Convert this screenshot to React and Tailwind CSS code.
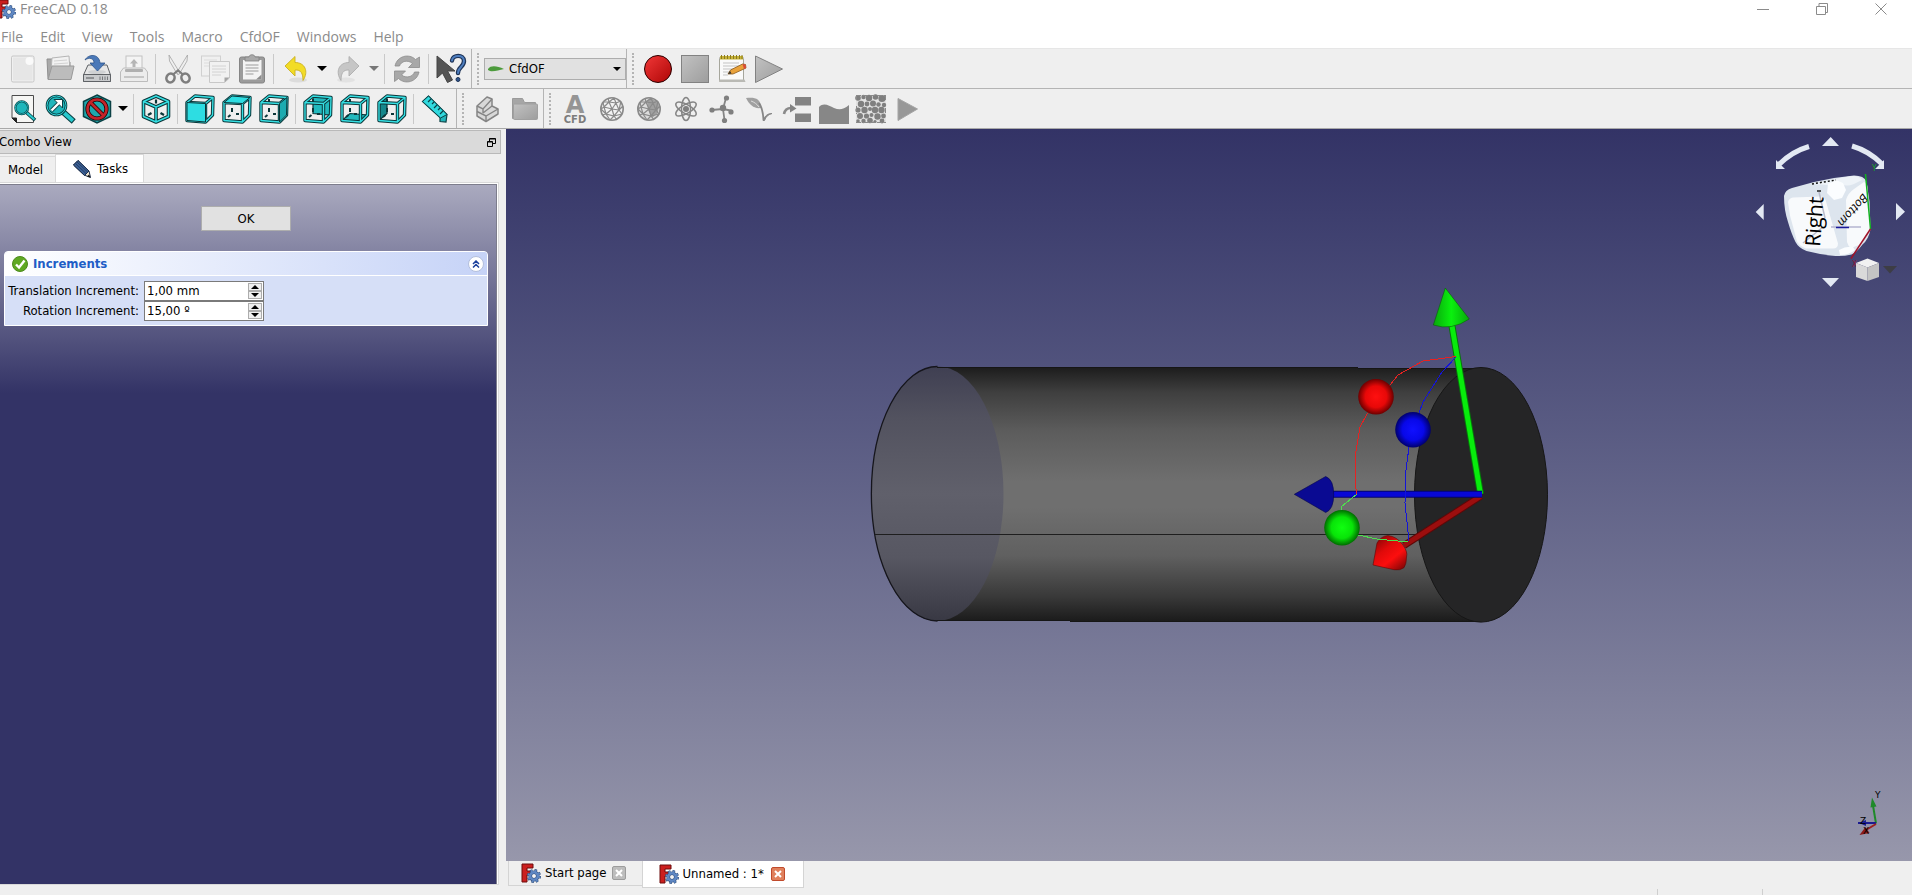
import { useState } from 'react'
import clsx from 'clsx'

const MENUS = ['File', 'Edit', 'View', 'Tools', 'Macro', 'CfdOF', 'Windows', 'Help']

function Icon({ children, className = 'size-[30px]' }) {
  return (
    <svg viewBox="0 0 30 30" className={clsx('shrink-0 overflow-visible', className)} fill="none" aria-hidden="true">
      {children}
    </svg>
  )
}

/* ---------- file icons ---------- */

const NewIcon = () => (
  <Icon>
    <rect x="3.500" y="2" width="22.500" height="26" rx="1.500" fill="#f0f0f0" stroke="#c6c6c6" />
    <rect x="5" y="3.500" width="19.500" height="23" fill="#e6e6e6" />
    <circle cx="21.500" cy="7" r="4" fill="#fafafa" />
  </Icon>
)

const OpenIcon = () => (
  <Icon>
    <path d="M2 5h9l2 3h12v17H3z" fill="#a9a9a9" stroke="#8f8f8f" />
    <path d="M7 4l17-2 1 16H6z" fill="#f2f2f2" stroke="#b5b5b5" />
    <path d="M9 7l13-1M9 10l14-1" stroke="#d2d2d2" />
    <path d="M7 12h22l-3 13.500H3z" fill="#bcbcbc" stroke="#999" />
  </Icon>
)

const SaveIcon = () => (
  <Icon>
    <path d="M6 11h19l3.500 10v6.500h-27V21z" fill="#e6e6e6" stroke="#5f6266" />
    <path d="M1.500 20.500h27v7h-27z" fill="#c9cbcd" stroke="#5f6266" />
    <ellipse cx="15" cy="18" rx="9" ry="2" fill="#cfd1d3" />
    <path d="M4 24h8" stroke="#8e9093" strokeWidth="2" />
    <path d="M18 22.500v3.500M20.500 22.500v3.500M23 22.500v3.500M25.500 22.500v3.500" stroke="#77797c" />
    <path d="M3 6C6 0 17-1 18 9h5l-7.500 8L8 9h4C12 4 7 3 3 6z" fill="#4a78b8" stroke="#2d548c" strokeWidth=".8" />
  </Icon>
)

const PrintIcon = () => (
  <Icon>
    <rect x="7" y="2" width="16" height="14" fill="#f4f4f4" stroke="#c2c2c2" />
    <path d="M15 5l4 4.500h-2.500V13h-3V9.500H11z" fill="#b5b5b5" />
    <path d="M4.500 14h21l3 4v9.500h-27V18z" fill="#ececec" stroke="#bcbcbc" />
    <rect x="6" y="15" width="18" height="3" rx="1" fill="#b0b0b0" />
    <path d="M5 23h20" stroke="#c6c6c6" strokeWidth="2" />
  </Icon>
)

const CutIcon = () => (
  <Icon>
    <path d="M6 1l11 18-2.500 1.500L6.500 7z" fill="#efefef" stroke="#a3a3a3" strokeWidth=".8" />
    <path d="M24.500 1l-11 18 2.500 1.500L24 7z" fill="#efefef" stroke="#a3a3a3" strokeWidth=".8" />
    <ellipse cx="7.500" cy="24" rx="4" ry="4.500" stroke="#7e7e7e" strokeWidth="2.600" transform="rotate(25 7.500 24)" />
    <ellipse cx="22.500" cy="24" rx="4" ry="4.500" stroke="#7e7e7e" strokeWidth="2.600" transform="rotate(-25 22.500 24)" />
    <path d="M10 20.500l5-4 5 4" stroke="#7e7e7e" strokeWidth="2.200" />
  </Icon>
)

const CopyIcon = () => (
  <Icon>
    <rect x="1.500" y="2" width="19" height="20" fill="#f0f0f0" stroke="#d0d0d0" />
    <path d="M4 6h13M4 9h13M4 12h8" stroke="#dcdcdc" />
    <path d="M9.500 7.500h20V24l-5 4.500h-15z" fill="#f1f1f1" stroke="#c8c8c8" />
    <path d="M12 12h14M12 15h14M12 18h14M12 21h9" stroke="#d2d2d2" />
    <path d="M29.500 23.500h-5v5z" fill="#a5a5a5" />
  </Icon>
)

const PasteIcon = () => (
  <Icon>
    <rect x="2.500" y="3" width="25" height="26" rx="2" fill="#9b9b9b" stroke="#858585" />
    <rect x="6" y="6" width="18.500" height="19.500" fill="#f3f3f3" />
    <path d="M8.500 11h13M8.500 14h13M8.500 17h13M8.500 20h8" stroke="#b9b9b9" strokeWidth="1.300" />
    <path d="M19 25.500l5.500-5v5z" fill="#8d8d8d" />
    <path d="M8 3h4c0-3 6-3 6 0h4v4H8z" fill="#a9a9a9" stroke="#808080" strokeWidth=".8" />
  </Icon>
)

const UndoIcon = () => (
  <Icon>
    <ellipse cx="17" cy="26" rx="9" ry="2.500" fill="#dcdcdc" />
    <path d="M4 12L14 2.500v6c10 0 14 9 8 18 0-7-2-11-8-10.500V22z" fill="#f2dc26" stroke="#c9b022" strokeWidth=".9" />
  </Icon>
)

const RedoIcon = () => (
  <Icon>
    <ellipse cx="13" cy="26" rx="9" ry="2.500" fill="#e2e2e2" />
    <path d="M26 12L16 2.500v6c-10 0-14 9-8 18 0-7 2-11 8-10.500V22z" fill="#c6c6c6" stroke="#aeaeae" strokeWidth=".9" />
  </Icon>
)

const RefreshIcon = () => (
  <Icon>
    <path d="M3 12C5 2 17-1 23.500 5.500L27.500 3v10.500H16.500l4-4C16 5.500 9 7 7.500 12z" fill="#a8a8a8" stroke="#8b8b8b" strokeWidth=".8" />
    <path d="M27 18C25 28 13 31 6.500 24.500L2.500 27.500V17h11l-4 4C14 24.500 21 23 22.500 18z" fill="#a8a8a8" stroke="#8b8b8b" strokeWidth=".8" />
  </Icon>
)

const WhatsThisIcon = () => (
  <Icon>
    <path d="M1 2v22l5.500-5 5 9.500 5-2.500-5-9h7.500z" fill="#555" stroke="#444" />
    <path d="M16 6.500C16.500.5 28 0 28 7c0 6-6 6-6 12" stroke="#1e3458" strokeWidth="4.400" strokeLinecap="round" />
    <path d="M16 6.500C16.500.5 28 0 28 7c0 6-6 6-6 12" stroke="#4f7fc0" strokeWidth="2" strokeLinecap="round" />
    <circle cx="22" cy="25.500" r="2" fill="#31558a" stroke="#1e3458" />
  </Icon>
)

/* ---------- macro icons ---------- */

const RecordIcon = () => (
  <Icon>
    <defs>
      <linearGradient id="rec" x2="1" y2="1">
        <stop stopColor="#f23838" />
        <stop offset="1" stopColor="#ad0606" />
      </linearGradient>
    </defs>
    <circle cx="15" cy="15" r="13.500" fill="url(#rec)" stroke="#2b0000" />
  </Icon>
)

const StopIcon = () => (
  <Icon>
    <rect x="1.500" y="1.500" width="27" height="27" fill="url(#greyFill)" stroke="#828282" />
  </Icon>
)

const NotesIcon = () => (
  <Icon>
    <rect x="2.500" y="3" width="24" height="24.500" rx="1.500" fill="#fafafa" stroke="#a6a69c" />
    <path d="M2.500 25.500h25l1 2.500H2z" fill="#b9b9b4" />
    <rect x="3" y="2" width="23" height="3.500" fill="#c8b437" />
    <path d="M4.500 1v4M7.500 1v4M10.500 1v4M13.500 1v4M16.500 1v4M19.500 1v4M22.500 1v4M25 1v4" stroke="#8a7a20" />
    <path d="M6 9h16M6 12h16M6 15h12M6 18h8M6 21h5" stroke="#c3c3c3" />
    <path d="M11 20l2.500-4L25.500 10l3 .5.500 3.500L16 20z" fill="#e9a23b" stroke="#8c5a1c" strokeWidth=".8" />
    <path d="M25.500 10l3 .5.500 3.500-2 1z" fill="#d9493a" />
    <path d="M11 20l2-3 1.500 2.500z" fill="#333" />
  </Icon>
)

const PlayIcon = () => (
  <Icon>
    <path d="M1.500 2v26.500L28.500 15z" fill="url(#greyFill)" stroke="#828282" />
  </Icon>
)

/* ---------- view icons ---------- */

const Magnifier = ({ arrow }) => (
  <>
    <path d="M17 17l9.500 8.500" stroke="#0b4145" strokeWidth={arrow ? 6 : 4.500} strokeLinecap="square" />
    <path d="M17 17l9.500 8.500" stroke="#28c9cd" strokeWidth={arrow ? 3.800 : 2.500} strokeLinecap="square" />
    <circle cx="11.500" cy="11.500" r={arrow ? 9.500 : 8} fill="#1fb6bb" stroke="#0b4145" strokeWidth="2.600" />
    <circle cx="11.500" cy="11.500" r={arrow ? 9.500 : 8} stroke="#2fd3d8" strokeWidth="1" />
  </>
)

const FitAllIcon = () => (
  <Icon>
    <path d="M4 1.500h21.500v27H8.500L4 24z" fill="#f6f6f4" stroke="#4b4b4b" />
    <path d="M4 24h4.500v4.500z" fill="#222" stroke="#222" />
    <g transform="translate(4.500 4.500) scale(.8)">
      <Magnifier />
    </g>
  </Icon>
)

const FitSelectionIcon = () => (
  <Icon>
    <Magnifier arrow />
    <path d="M6.500 16.500L14 9" stroke="#0b4145" strokeWidth="4" />
    <path d="M9 5.500h8.500V14z" fill="#fff" stroke="#0b4145" />
    <path d="M6.500 16.500L14.500 8.500" stroke="#fff" strokeWidth="2.400" />
  </Icon>
)

const DrawStyleIcon = () => (
  <Icon>
    <path d="M15 1l13.500 6.500v15L15 29 1.500 22.500v-15z" fill="#1fa8ad" stroke="#0b4145" strokeWidth="1.500" />
    <circle cx="15" cy="15" r="9.500" stroke="#200" strokeWidth="4.200" />
    <path d="M8.500 8.500l13 13" stroke="#200" strokeWidth="4.200" />
    <circle cx="15" cy="15" r="9.500" stroke="#c3242a" strokeWidth="2.600" />
    <path d="M8.500 8.500l13 13" stroke="#c3242a" strokeWidth="2.600" />
  </Icon>
)

const IsoIcon = () => {
  const d = 'M15 2L27.500 7.500v15L15 28 2.500 22.500v-15zM2.500 7.500L15 13l12.500-5.500M15 13v15'
  return (
    <Icon>
      <path d={d} stroke="#0b3538" strokeWidth="3.600" strokeLinejoin="round" />
      <path d={d} stroke="#35dfe3" strokeWidth="1.500" strokeLinejoin="round" />
      <path d="M15 5.500v4M7 21l3.500-2M23 21l-3.500-2" stroke="#0b3538" strokeWidth="2.200" />
    </Icon>
  )
}

const CUBE_FACES = {
  front: 'M2 8.500L20.500 9.500 20.500 28 2 26.500z',
  top: 'M2 8.500L10 2 28 3.500 20.500 9.500z',
  right: 'M20.500 9.500L28 3.500 27.500 21 20.500 28z',
  rear: 'M10 2L28 3.500 27.500 21 10 19.500z',
  bottom: 'M2 26.500L10 19.500 27.500 21 20.500 28z',
  left: 'M2 8.500L10 2 10 19.500 2 26.500z',
}

function CubeIcon({ face }) {
  const behind = ['rear', 'bottom', 'left'].includes(face)
  const frame = 'M2 8.500L20.500 9.500 20.500 28 2 26.500zM2 8.500L10 2 28 3.500 27.500 21 20.500 28M20.500 9.500L28 3.500'
  return (
    <Icon>
      {behind && <path d={CUBE_FACES[face]} fill={face === 'left' ? '#15878b' : '#22b9bd'} stroke="#0b3538" strokeWidth="1.200" />}
      {face !== 'front' && <path d="M10 5v3.500M10 14v4M14 20h3M6 23l2.500-2" stroke="#0b3538" strokeWidth="2" />}
      <path d={frame} stroke="#0b3538" strokeWidth="3.400" strokeLinejoin="round" />
      <path d={frame} stroke="#35dfe3" strokeWidth="1.400" strokeLinejoin="round" />
      {!behind && <path d={CUBE_FACES[face]} fill={face === 'right' ? '#1cabb0' : '#2ddde2'} stroke="#0b3538" strokeWidth="1" />}
    </Icon>
  )
}

const RulerIcon = () => (
  <Icon>
    <path d="M1.500 7.500L7.500 2 26 20.500 25 28l-6-.5v-4z" fill="#22b5ba" stroke="#0b4145" strokeWidth="1.200" />
    <path d="M7.500 2L26 20.500 19.500 24 1.500 7.500z" fill="#30d9de" stroke="#0b4145" />
    <path d="M10 5l-3 3M13 8l-2 2M16 11l-3 3M19 14l-2 2M22 17l-3 3" stroke="#0b4145" strokeWidth="1.200" />
  </Icon>
)

/* ---------- CfdOF icons ---------- */

const PartIcon = () => (
  <Icon>
    <path d="M4 12L14 3l5 2v7l6 3v5L13 27.500 4 22z" fill="#d8d8d8" stroke="#858585" strokeWidth="1.500" strokeLinejoin="round" />
    <path d="M4 12l6 3 9-10M10 15v4M4 17.500l9 4.500 12-7M10 19l9-7M13 22v5" stroke="#858585" strokeWidth="1.400" />
  </Icon>
)

const FolderIcon = () => (
  <Icon>
    <path d="M2.500 4.500h10l2 4h11v16h-23z" fill="#a6a6a6" stroke="#9a9a9a" />
    <rect x="3.500" y="10" width="24" height="15.500" rx="1" fill="url(#greyFill)" stroke="#a0a0a0" />
  </Icon>
)

const AnalysisIcon = () => (
  <Icon>
    <text x="15" y="19" textAnchor="middle" fontSize="24" fontWeight="700" fill="#959595" fontFamily="DejaVu Sans, sans-serif">A</text>
    <text x="15" y="29" textAnchor="middle" fontSize="10" fontWeight="700" fill="#7c7c7c" fontFamily="DejaVu Sans, sans-serif">CFD</text>
  </Icon>
)

const MeshBallIcon = ({ dark }) => (
  <Icon>
    <circle cx="15" cy="15" r="11.200" fill={dark ? '#dcdcdc' : '#f2f2f2'} stroke="#8a8a8a" strokeWidth="1.600" />
    {dark && <path d="M13 6l6-1 6 5-1 9-6 5-4-8z" fill="#a0a0a0" />}
    <path
      d="M12 8l7 1 3 7-5 6-8-2-2-7zM12 8l3 7 7 1M19 9l-4 6 2 7M15 15l-8-2M15 15l-6 5M12 8l-1-4M12 8L6 8M12 8l5-4M19 9l-2-5M19 9l5-2M22 16l4-4M22 16l2-9M22 16l3 4M17 22l8-2M17 22l3 4M17 22l-4 4M9 20l4 6M9 20l-4 1M9 20l-5-5M7 13l-3 2M7 13L6 8"
      stroke="#8a8a8a"
      strokeWidth="1.200"
    />
  </Icon>
)

const AtomIcon = () => (
  <Icon>
    {[0, 60, 120].map((r) => (
      <ellipse key={r} cx="15" cy="15" rx="4.500" ry="11.500" stroke="#858585" strokeWidth="1.500" transform={`rotate(${r} 15 15)`} />
    ))}
    <circle cx="15" cy="15" r="3" fill="#808080" />
  </Icon>
)

const InitialiseIcon = () => (
  <Icon>
    <path d="M15 15L3.500 16M15 15l3-11M15 15l10 2M15 15l1.500 11" stroke="#858585" strokeWidth="1.800" />
    <g fill="#7f7f7f">
      <circle cx="15" cy="14" r="3.200" />
      <circle cx="4" cy="16" r="2.600" />
      <circle cx="18.500" cy="4" r="2.600" />
      <circle cx="23" cy="18" r="2.600" />
      <circle cx="16.500" cy="26.500" r="2.600" />
    </g>
  </Icon>
)

const LeafIcon = () => (
  <Icon>
    <path d="M1 4c8-1 15 0 15 10C8 15 4 10 1 4z" fill="#a0a0a0" />
    <path d="M6 7c3 1 6 3 8 6" stroke="#dcdcdc" />
    <path d="M14 9c3 4 4 9 4.500 17" stroke="#868686" strokeWidth="1.800" />
    <path d="M18 26.500c2-5 5-7 9-7-4 1-6 3-7.500 7z" fill="#868686" stroke="#868686" />
  </Icon>
)

const BoundaryIcon = () => (
  <Icon>
    <rect x="13" y="3" width="16" height="8.500" fill="#838383" />
    <rect x="13" y="19.500" width="16" height="8.500" fill="#838383" />
    <path d="M2 20c1-5 4-6 7-6" stroke="#8a8a8a" strokeWidth="2.600" />
    <path d="M8 10l6.500 4.500L8 18.500z" fill="#838383" />
  </Icon>
)

const FluidZoneIcon = () => (
  <Icon>
    <path d="M0 13c5-5 10-1 15 1s9 2 15-3v19H0z" fill="#878787" />
  </Icon>
)

const PorousIcon = () => {
  const dots = [
    [2, 4, 2.8], [7.5, 3, 2.2], [13, 4, 3.2], [19.5, 3, 2.8], [26, 4.5, 3.6], [5, 10, 3.2], [11, 10, 2.4], [17, 9.5, 3], [22.5, 10.5, 2.2], [28, 11, 2.2],
    [2, 16, 2.6], [8.500, 16, 3.2], [14, 15, 2], [19, 16, 3.2], [25.5, 16, 3.2], [4, 22, 3], [10.5, 22, 2.6], [15.500, 21, 2], [21.5, 22.500, 3.2], [27.5, 22, 2.4],
    [2, 27, 1.8], [7.500, 27, 2.2], [14, 26.5, 2.8], [19, 27.500, 1.6], [26, 27, 2.4],
  ]
  return (
    <Icon>
      <rect x="0" y="1" width="30" height="28" fill="#e2e2e2" />
      {dots.map(([x, y, r]) => (
        <circle key={`${x}-${y}`} cx={x} cy={y} r={r} fill="#7f7f7f" />
      ))}
      <path d="M0 1.500h30M0 28.500h30M.5 1v6M.5 12v8M29.500 1v6M29.500 14v6" stroke="#8a8a8a" strokeDasharray="5 2" />
    </Icon>
  )
}

const SolveIcon = () => (
  <Icon>
    <path d="M5 4.500v22L24.500 15z" fill="#989898" stroke="#a5a5a5" />
  </Icon>
)

/* ---------- shared chrome ---------- */

function FreeCadIcon({ className }) {
  return (
    <svg viewBox="0 0 20 20" className={clsx('shrink-0', className)} fill="none" aria-hidden="true">
      <path d="M1 1h11v4H6v3h4v4H6v7H1z" fill="#cb1f1f" stroke="#6d0d0d" />
      <circle cx="13" cy="13" r="5.500" stroke="#2c4a78" strokeWidth="3" strokeDasharray="2.300 2" />
      <circle cx="13" cy="13" r="3.800" fill="#f4f4f4" stroke="#2c4a78" strokeWidth="3.600" />
      <circle cx="13" cy="13" r="3.800" stroke="#5f88c4" strokeWidth="2.600" />
      <circle cx="13" cy="13" r="5.500" stroke="#5f88c4" strokeWidth="2" strokeDasharray="1.700 2.600" strokeDashoffset="-.3" />
    </svg>
  )
}

function ToolButton({ label, children, disabled }) {
  return (
    <button type="button" title={label} aria-label={label} disabled={disabled} className="flex h-9 w-[37px] items-center justify-center">
      {children}
    </button>
  )
}

function DropArrow({ label, muted }) {
  return (
    <button type="button" aria-label={label} className="flex h-9 w-[15px] items-center justify-center">
      <svg viewBox="0 0 10 5" className="h-[5px] w-[10px]" aria-hidden="true">
        <path d="M0 0h10L5 5z" fill={muted ? '#777' : '#000'} />
      </svg>
    </button>
  )
}

const Separator = () => <div className="mx-[3px] h-[30px] w-px bg-[#c9c9c9]" />

const Handle = () => (
  <div className="flex w-3 justify-center">
    <div className="h-8 border-l-2 border-dotted border-[#b4b4b4]" />
  </div>
)

function ToolGroup({ children, last }) {
  return <div className={clsx('flex items-center', !last && 'border-r border-[#b4b4b4]')}>{children}</div>
}

function FileToolbar() {
  return (
    <div className="flex h-10 items-stretch border-b border-[#b4b4b4]" role="toolbar" aria-label="File">
      <ToolGroup>
        <div className="w-1" />
        <ToolButton label="New" disabled><NewIcon /></ToolButton>
        <ToolButton label="Open" disabled><OpenIcon /></ToolButton>
        <ToolButton label="Save"><SaveIcon /></ToolButton>
        <ToolButton label="Print" disabled><PrintIcon /></ToolButton>
        <Separator />
        <ToolButton label="Cut" disabled><CutIcon /></ToolButton>
        <ToolButton label="Copy" disabled><CopyIcon /></ToolButton>
        <ToolButton label="Paste" disabled><PasteIcon /></ToolButton>
        <Separator />
        <ToolButton label="Undo"><UndoIcon /></ToolButton>
        <DropArrow label="Undo history" />
        <ToolButton label="Redo" disabled><RedoIcon /></ToolButton>
        <DropArrow label="Redo history" muted />
        <Separator />
        <ToolButton label="Refresh" disabled><RefreshIcon /></ToolButton>
        <Separator />
        <ToolButton label="What's this?"><WhatsThisIcon /></ToolButton>
        <div className="w-[2px]" />
      </ToolGroup>
      <ToolGroup>
        <Handle />
        <div className="relative w-[142px]">
          <select aria-label="Workbench" className="h-[22px] w-full appearance-none border border-[#adadad] bg-[#e1e1e1] pl-6 text-[13px] leading-4">
            <option>CfdOF</option>
          </select>
          <svg viewBox="0 0 16 6" className="pointer-events-none absolute top-2 left-1 h-[6px] w-4" aria-hidden="true">
            <path d="M0 3C3-1 9 0 16 3 10 4 4 7 0 4z" fill="#4c9b3c" />
          </svg>
          <svg viewBox="0 0 8 4" className="pointer-events-none absolute top-[9px] right-[5px] h-1 w-2" aria-hidden="true">
            <path d="M0 0h8L4 4z" fill="#000" />
          </svg>
        </div>
      </ToolGroup>
      <ToolGroup last>
        <Handle />
        <ToolButton label="Record macro"><RecordIcon /></ToolButton>
        <ToolButton label="Stop macro" disabled><StopIcon /></ToolButton>
        <ToolButton label="Macros"><NotesIcon /></ToolButton>
        <ToolButton label="Execute macro" disabled><PlayIcon /></ToolButton>
      </ToolGroup>
    </div>
  )
}

function ViewToolbar() {
  return (
    <div className="flex h-10 items-stretch border-b border-[#a9a9a9]" role="toolbar" aria-label="View">
      <ToolGroup>
        <div className="w-1" />
        <ToolButton label="Fit all"><FitAllIcon /></ToolButton>
        <ToolButton label="Fit selection"><FitSelectionIcon /></ToolButton>
        <ToolButton label="Draw style"><DrawStyleIcon /></ToolButton>
        <DropArrow label="Draw styles" />
        <Separator />
        <ToolButton label="Isometric"><IsoIcon /></ToolButton>
        <Separator />
        {['front', 'top', 'right'].map((face) => (
          <ToolButton key={face} label={face}><CubeIcon face={face} /></ToolButton>
        ))}
        <Separator />
        {['rear', 'bottom', 'left'].map((face) => (
          <ToolButton key={face} label={face}><CubeIcon face={face} /></ToolButton>
        ))}
        <Separator />
        <ToolButton label="Measure distance"><RulerIcon /></ToolButton>
        <div className="w-[2px]" />
      </ToolGroup>
      <ToolGroup>
        <Handle />
        <ToolButton label="Create part" disabled><PartIcon /></ToolButton>
        <ToolButton label="Create group" disabled><FolderIcon /></ToolButton>
      </ToolGroup>
      <ToolGroup last>
        <Handle />
        <ToolButton label="Analysis container" disabled><AnalysisIcon /></ToolButton>
        <ToolButton label="CFD mesh" disabled><MeshBallIcon /></ToolButton>
        <ToolButton label="Mesh refinement" disabled><MeshBallIcon dark /></ToolButton>
        <ToolButton label="Select models" disabled><AtomIcon /></ToolButton>
        <ToolButton label="Fluid properties" disabled><InitialiseIcon /></ToolButton>
        <ToolButton label="Initialise" disabled><LeafIcon /></ToolButton>
        <ToolButton label="Fluid boundary" disabled><BoundaryIcon /></ToolButton>
        <ToolButton label="Initialisation zone" disabled><FluidZoneIcon /></ToolButton>
        <ToolButton label="Porous zone" disabled><PorousIcon /></ToolButton>
        <ToolButton label="Solver job control" disabled><SolveIcon /></ToolButton>
      </ToolGroup>
    </div>
  )
}

function TitleBar() {
  return (
    <div className="flex h-[18px] items-center text-[#8b8b8b]">
      <FreeCadIcon className="-ml-1 size-5" />
      <span className="ml-1 text-[14px] leading-4">FreeCAD 0.18</span>
      <div className="mr-[2px] ml-auto flex">
        {[
          ['Minimize', 'M0 6.500h12'],
          ['Restore', 'M.5 3.500h9v8h-9zM3 3V.5h8.500v9H10'],
          ['Close', 'M.5.5l11 11M11.500.5l-11 11'],
        ].map(([label, d]) => (
          <button key={label} type="button" aria-label={label} className="flex h-4 w-[59px] items-center justify-center">
            <svg viewBox="0 0 12 12" className="size-3" fill="none" stroke="#8b8b8b" aria-hidden="true">
              <path d={d} />
            </svg>
          </button>
        ))}
      </div>
    </div>
  )
}

/* ---------- combo view ---------- */

function SpinBox({ id, label, initial }) {
  const [value, setValue] = useState(initial)
  return (
    <>
      <label htmlFor={id} className="text-right">{label}</label>
      <div className="flex h-5 w-[120px] border border-[#7a7a7a] bg-white p-px">
        <input id={id} value={value} onChange={(e) => setValue(e.target.value)} className="w-full min-w-0 pl-px outline-none" />
        <div className="flex w-[14px] shrink-0 flex-col">
          <button type="button" aria-label={`${label} up`} className="flex flex-1 items-center justify-center border border-[#adadad] bg-[#efefef]">
            <svg viewBox="0 0 8 4" className="h-1 w-2" aria-hidden="true"><path d="M0 4h8L4 0z" /></svg>
          </button>
          <button type="button" aria-label={`${label} down`} className="flex flex-1 items-center justify-center border border-[#adadad] bg-[#efefef]">
            <svg viewBox="0 0 8 4" className="h-1 w-2" aria-hidden="true"><path d="M0 0h8L4 4z" /></svg>
          </button>
        </div>
      </div>
    </>
  )
}

function ComboView() {
  return (
    <aside className="flex w-[506px] shrink-0 flex-col pt-px">
      <div className="mr-[5px] flex h-6 items-center justify-between border border-l-0 border-[#b9b9b9] bg-[#dadada] pr-1">
        <h2 className="-ml-px">Combo View</h2>
        <button type="button" aria-label="Float panel">
          <svg viewBox="0 0 9 9" className="size-[9px]" fill="none" stroke="#000" aria-hidden="true">
            <path d="M2.500 3V.5h6v5H6M2.500 1h6M.5 3.500h5v5h-5zM.5 4h5" />
          </svg>
        </button>
      </div>
      <div className="flex items-end" role="tablist">
        <button type="button" role="tab" aria-selected="false" className="flex h-[26px] w-[55px] items-center border-t border-[#d9d9d9] pl-2">Model</button>
        <button type="button" role="tab" aria-selected="true" className="flex h-7 w-[89px] items-center border border-b-0 border-[#d9d9d9] bg-white pl-4">
          <svg viewBox="0 0 20 20" className="mr-[5px] size-5" fill="none" aria-hidden="true">
            <path d="M1.500 6L6 1.500 17 12l1.500 6.500L12 16z" fill="#f2e6d0" stroke="#1d2f4c" />
            <path d="M1.500 6L6 1.500 17 12 12.500 16.500z" fill="#3b5f94" stroke="#1d2f4c" />
            <path d="M3.500 4.500l10.500 10M5 3l10.500 10" stroke="#263f66" />
            <path d="M15 17.500l2-2 1.500 3z" fill="#111" />
          </svg>
          Tasks
        </button>
      </div>
      <div className="mr-[7px] mb-[10px] flex flex-1 flex-col border border-l-0 border-[#d9d9d9] bg-white pt-px pr-px">
        <div className="flex-1 border-t border-r border-[#7d7d8c] bg-[#333366] bg-[linear-gradient(#aaaabf_0px,#333366_208px)] bg-no-repeat pt-[21px] pr-2 pl-1">
          <div className="flex justify-center">
            <button type="button" className="h-[25px] w-[90px] border border-[#adadad] bg-[#e1e1e1]">OK</button>
          </div>
          <section className="mt-5 overflow-hidden rounded-t border border-white bg-[#d6dff7]">
            <header className="flex h-6 items-center border-b border-white bg-linear-to-r from-white to-[#c6d3f7] pr-[3px] pl-[7px]">
              <svg viewBox="0 0 16 16" className="size-4" fill="none" aria-hidden="true">
                <circle cx="8" cy="8" r="7.500" fill="#5fa823" stroke="#4c8a1c" />
                <path d="M4 8.500l3 3 5.500-7" stroke="#fff" strokeWidth="2.400" />
              </svg>
              <h3 className="ml-[5px] text-[13px] font-bold text-[#215dc6]">Increments</h3>
              <button type="button" aria-label="Collapse" className="ml-auto flex size-4 items-center justify-center rounded-full border border-[#b3bfdd] bg-white">
                <svg viewBox="0 0 8 8" className="size-2" fill="none" stroke="#1b3f9c" strokeWidth="1.500" aria-hidden="true">
                  <path d="M1 4l3-3 3 3M1 7.500l3-3 3 3" />
                </svg>
              </button>
            </header>
            <div className="grid grid-cols-[134px_120px] items-center gap-x-[5px] pt-[5px] pb-1">
              <SpinBox id="translation" label="Translation Increment:" initial="1,00 mm" />
              <SpinBox id="rotation" label="Rotation Increment:" initial="15,00 º" />
            </div>
          </section>
        </div>
      </div>
    </aside>
  )
}

/* ---------- 3D view ---------- */

function Gradient({ id, light, mid, dark }) {
  return (
    <radialGradient id={id} cx=".5" cy=".5" r=".5">
      <stop stopColor={light} />
      <stop offset=".6" stopColor={mid} />
      <stop offset="1" stopColor={dark} />
    </radialGradient>
  )
}

function Cylinder() {
  return (
    <g>
      <path d="M937 367H1358V368H1481V622H1070V621H937A66 127 0 0 1 937 367z" fill="url(#body)" />
      <ellipse cx="937.500" cy="493.700" rx="66" ry="127.300" fill="url(#cap)" />
      <path d="M937.500 366.500A66 127 0 0 0 937.500 621" stroke="#15151c" strokeWidth="1.300" />
      <path d="M937 367.500H1358M1358 368.500H1481M937 620.500H1070M1070 621.500H1481" stroke="#161616" />
      <path d="M875 534.500H1416" stroke="#1e1e1e" />
      <ellipse cx="1481" cy="494.800" rx="66.500" ry="127.300" fill="#252526" stroke="#161616" />
    </g>
  )
}

function Dragger() {
  return (
    <g>
      <path d="M1452 326L1480.500 494" stroke="#06760a" strokeWidth="7" />
      <path d="M1452 326L1480.500 494" stroke="#08ec0c" strokeWidth="5" />
      <path d="M1445.300 288L1433.300 325q18 6 36-6z" fill="url(#coneGreen)" stroke="#0a5a0c" strokeWidth=".6" />
      <path d="M1481 496L1404 545.500" stroke="#5d0808" strokeWidth="7" />
      <path d="M1481 496L1404 545.500" stroke="#9c0e0e" strokeWidth="5" />
      <path d="M1373 565l4-22q4-7 11-7.500 9 1 15 9.500 5 7 3.500 12 0 7-2.500 10.700-4 3-10 2z" fill="url(#coneRed)" stroke="#5d0808" strokeWidth=".6" />
      <path d="M1332 494.300H1482" stroke="#05056e" strokeWidth="7" />
      <path d="M1332 494.300H1482" stroke="#0808d6" strokeWidth="5" />
      <path d="M1294.300 494.300l31.400-17.800q8 3 8 18t-8 18z" fill="#0a0a92" stroke="#05054c" strokeWidth=".6" />
      <g shapeRendering="crispEdges">
        <path d="M1456 356.500l-33 4.500-25 14-31 39-7 13-5 30v26l2 11" stroke="#e62222" />
        <path d="M1456 357l-14 15-19 30-4 11-10 34-3 23-1 33 4 38" stroke="#1414d8" />
        <path d="M1357 494l-16 13v20l17 8 19 4 31 3" stroke="#4ee04e" />
      </g>
      <circle cx="1376" cy="396.700" r="17.800" fill="url(#ballRed)" />
      <circle cx="1413" cy="429.700" r="17.800" fill="url(#ballBlue)" />
      <circle cx="1342" cy="527.700" r="17.800" fill="url(#ballGreen)" />
    </g>
  )
}

function NaviCube() {
  return (
    <g>
      <g fill="#e3e9f3">
        <path d="M1822 146l8.700-9 8.300 9zM1822 278h17l-8.300 9zM1755.700 212l8-8v16zM1896 203l9 8.700-9 8.600z" />
        <path d="M1776 160v9h9zM1884 160v9h-9z" />
      </g>
      <path d="M1809 146.500q-17 5-30 18M1852 146q17 5 30 18" stroke="#e3e9f3" strokeWidth="5" />
      <path
        d="M1784 196q1-6 8-8l22-6 20-4 20-2.500q10 0 12.500 6l3 20 1 28q-2 10-8 15-6 8-11 10-8 2-16 1.500-14-1-29-5-8-3-11-9-4-8-7.500-20-4-12-4-26z"
        fill="#dde5ee"
      />
      <path d="M1788 202q1-4 5-4.500l28-1q4 1 5 5l12 42q0 5-5 5l-27 0q-6-2-9-7l-7-26z" fill="#f8fafc" />
      <path d="M1846 200q2-7 8-11l10-7q3 1 3.500 5l2.500 40q-4 12-11 18l-8 3q-3-2-4-6z" fill="#f8fafc" />
      <path d="M1812 184l28-6 12-2q8 0 10 4l-8 4q-8 3-13 0l-14 1z" fill="#eef3f8" />
      <path d="M1828 184l8-4 7 3 3 7-4 8-8 2-7-7z" fill="#fbfdff" />
      <path d="M1839 250q7-4 14-3l2 3q-6 5-15 5z" fill="#fbfdff" />
      <path d="M1812 184l24-4" stroke="#111" strokeWidth="1.500" strokeDasharray="2 2" />
      <path d="M1819 192l6 26M1803 243l20-16" stroke="#b9bccb" strokeWidth="1.500" />
      <path d="M1817 191h4" stroke="#222" strokeWidth="1.500" />
      <path d="M1831 227h30" stroke="#b4b4d0" strokeWidth="1.500" />
      <path d="M1836 227.500h13" stroke="#1a1a9c" strokeWidth="1.500" />
      <text transform="translate(1820 247) rotate(-86)" fontSize="21" fill="#000" fontFamily="Open Sans, sans-serif">Right</text>
      <text transform="translate(1863 193) rotate(132)" fontSize="12" fontStyle="italic" fill="#000" fontFamily="Open Sans, sans-serif">Bottom</text>
      <path d="M1865.500 174l5 55" stroke="#12b020" strokeWidth="1.500" />
      <path d="M1870.500 229L1851 258.500" stroke="#a01228" strokeWidth="1.500" />
      <text x="1872" y="171" fontSize="8" fill="#12b020">Y</text>
      <text x="1852" y="267" fontSize="8" fill="#8c1636">X</text>
      <path d="M1856 263l11.500-4.500L1879 263l-11.500 4.500z" fill="#f1f1f1" />
      <path d="M1856 263l11.500 4.500V281L1856 277z" fill="#d9d9d9" />
      <path d="M1879 263l-11.500 4.500V281l11.500-4z" fill="#c4c4c4" />
      <path d="M1883 266h14l-7 7.500z" fill="#3d3d45" />
    </g>
  )
}

function AxisCross() {
  return (
    <g>
      <path d="M1876 823.500l-3-18" stroke="#1f8a2a" strokeWidth="2" />
      <path d="M1872 797.500l-1.500 10 6-1z" fill="#1f8a2a" />
      <path d="M1876 823H1858" stroke="#1b1b92" strokeWidth="2" />
      <path d="M1859 823l7-3v6z" fill="#1b1b92" />
      <path d="M1876 824l-10 6" stroke="#9c2222" strokeWidth="2" />
      <path d="M1859.500 835l6-8 4 6z" fill="#8c1a1a" />
      <g fontSize="9" fill="#000" fontFamily="DejaVu Sans, sans-serif">
        <text x="1875" y="798">Y</text>
        <text x="1860" y="824">Z</text>
        <text x="1863" y="834">X</text>
      </g>
    </g>
  )
}

function Viewport() {
  return (
    <div className="min-h-0 flex-1 bg-linear-to-b from-[#333366] to-[#9797ab]">
      <svg viewBox="506 129 1406 732" className="block h-full w-full" fill="none" role="img" aria-label="3D view">
        <defs>
          <linearGradient id="body" x2="0" y2="1">
            <stop stopColor="#1c1c1c" />
            <stop offset=".1" stopColor="#3f3f3f" />
            <stop offset=".25" stopColor="#5c5c5c" />
            <stop offset=".45" stopColor="#6f6f6f" />
            <stop offset=".55" stopColor="#6f6f6f" />
            <stop offset=".74" stopColor="#606060" />
            <stop offset=".9" stopColor="#393939" />
            <stop offset="1" stopColor="#1a1a1a" />
          </linearGradient>
          <linearGradient id="cap" x2="0" y2="1">
            <stop stopColor="#3f3f52" />
            <stop offset=".2" stopColor="#52525f" />
            <stop offset=".5" stopColor="#60606b" />
            <stop offset=".75" stopColor="#575762" />
            <stop offset="1" stopColor="#383843" />
          </linearGradient>
          <linearGradient id="coneGreen">
            <stop stopColor="#08a80c" />
            <stop offset=".5" stopColor="#0af00e" />
            <stop offset="1" stopColor="#08a80c" />
          </linearGradient>
          <linearGradient id="coneRed" x1=".1" y1=".1" x2=".8" y2="1">
            <stop stopColor="#8c0606" />
            <stop offset=".35" stopColor="#e00a0a" />
            <stop offset=".65" stopColor="#fc0e0e" />
            <stop offset="1" stopColor="#8c0606" />
          </linearGradient>
          <Gradient id="ballRed" light="#ff1010" mid="#e80808" dark="#6c0000" />
          <Gradient id="ballBlue" light="#1010ff" mid="#0808e8" dark="#00006c" />
          <Gradient id="ballGreen" light="#10ff10" mid="#08e408" dark="#006c00" />
        </defs>
        <Cylinder />
        <Dragger />
        <NaviCube />
        <AxisCross />
      </svg>
    </div>
  )
}

function DocumentTab({ title, active }) {
  return (
    <div className={clsx('flex items-center border border-t-0 border-[#d4d4d4]', active ? 'h-[27px] bg-white pr-[18px] pl-4' : 'h-[25px] border-r-0 pr-4 pl-3')}>
      <button type="button" role="tab" aria-selected={active} className="flex items-center">
        <FreeCadIcon className="mr-1 size-5" />
        {title}
      </button>
      <button
        type="button"
        aria-label={`Close ${title}`}
        className={clsx('flex size-[14px] items-center justify-center rounded-xs border', active ? 'ml-[7px] border-[#c04a2c] bg-[#e0805c]' : 'ml-[5px] border-[#9c9c9c] bg-[#bdbdbd]')}
      >
        <svg viewBox="0 0 8 8" className="size-2" stroke="#fff" strokeWidth="2" aria-hidden="true">
          <path d="M1 1l6 6M7 1L1 7" />
        </svg>
      </button>
    </div>
  )
}

export default function App() {
  return (
    <div className="flex h-screen flex-col overflow-hidden bg-[#efefef] font-['DejaVu_Sans_Condensed','DejaVu_Sans',sans-serif] text-[13px] leading-4 text-black">
      <svg className="absolute size-0" aria-hidden="true">
        <linearGradient id="greyFill" x2="1" y2="1">
          <stop stopColor="#c2c2c2" />
          <stop offset="1" stopColor="#9d9d9d" />
        </linearGradient>
      </svg>
      <header className="border-b border-[#e6e6e6] bg-white font-['Open_Sans',sans-serif]">
        <TitleBar />
        <nav className="mt-2 flex h-[22px] items-center gap-[17px] text-[14px] text-[#8b8b8b]">
          {MENUS.map((name) => (
            <button key={name} type="button" className="first:ml-px">{name}</button>
          ))}
        </nav>
      </header>
      <FileToolbar />
      <ViewToolbar />
      <div className="flex min-h-0 flex-1">
        <ComboView />
        <main className="flex min-w-0 flex-1 flex-col">
          <Viewport />
          <div className="flex h-7 items-start pl-[2px]" role="tablist">
            <DocumentTab title="Start page" active={false} />
            <DocumentTab title="Unnamed : 1*" active />
          </div>
          <footer className="flex h-[6px] justify-end">
            <div className="w-[105px] border-l border-[#cfcfcf]" />
            <div className="w-[150px] border-l border-[#cfcfcf]" />
          </footer>
        </main>
      </div>
    </div>
  )
}
